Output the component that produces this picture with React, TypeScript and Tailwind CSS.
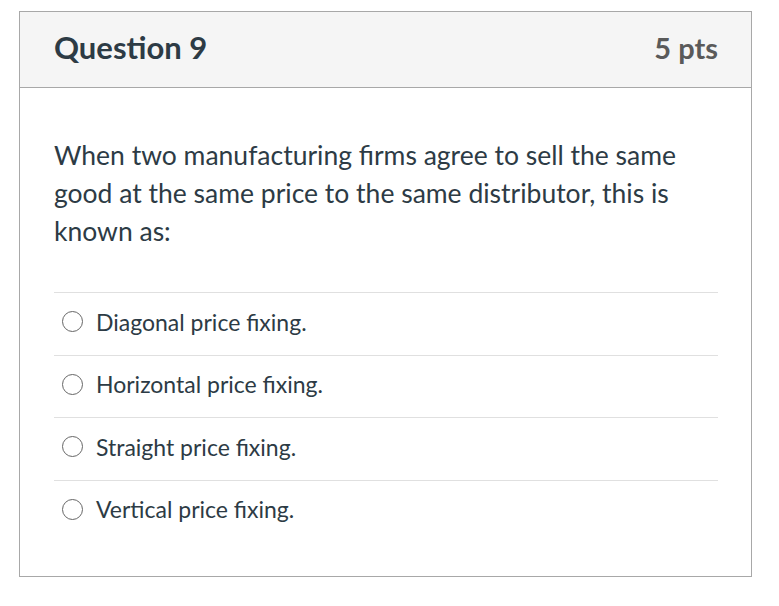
const answers = [
  "Diagonal price fixing.",
  "Horizontal price fixing.",
  "Straight price fixing.",
  "Vertical price fixing.",
];

export default function App() {
  return (
    <div className="min-h-screen bg-white pt-[11px] pl-[19px]" style={{ fontFamily: "Lato, 'Open Sans', sans-serif" }}>
      <div className="w-[733px] h-[566px] border border-[#a8a8a8] bg-white">
        {/* Header */}
        <div className="h-[76px] bg-[#f5f5f5] border-b border-[#a8a8a8] flex items-center justify-between pl-[34px] pr-[33px] pb-[4px]">
          <h2 className="text-[31px] font-bold text-[#2d3b45]">Question 9</h2>
          <span className="text-[29px] font-bold text-[#5a5a5a]">5 pts</span>
        </div>

        {/* Body */}
        <div className="pl-[34px] pr-[33px] pt-[48px]">
          <p className="text-[26.5px] leading-[38px] text-[#2d3b45] w-[650px]">
            When two manufacturing firms agree to sell the same good at the same price to the same distributor, this is known as:
          </p>

          <div className="mt-[42px]">
            {answers.map((a) => (
              <div key={a} className="h-[62.5px] border-t border-[#e0e0e0] flex items-center gap-[13px] pl-[8px] pb-[4px]">
                <span className="w-[21px] h-[21px] rounded-full border border-[#666] bg-white" />
                <span className="text-[23px] text-[#2d3b45]">{a}</span>
              </div>
            ))}
          </div>
        </div>
      </div>
    </div>
  );
}
